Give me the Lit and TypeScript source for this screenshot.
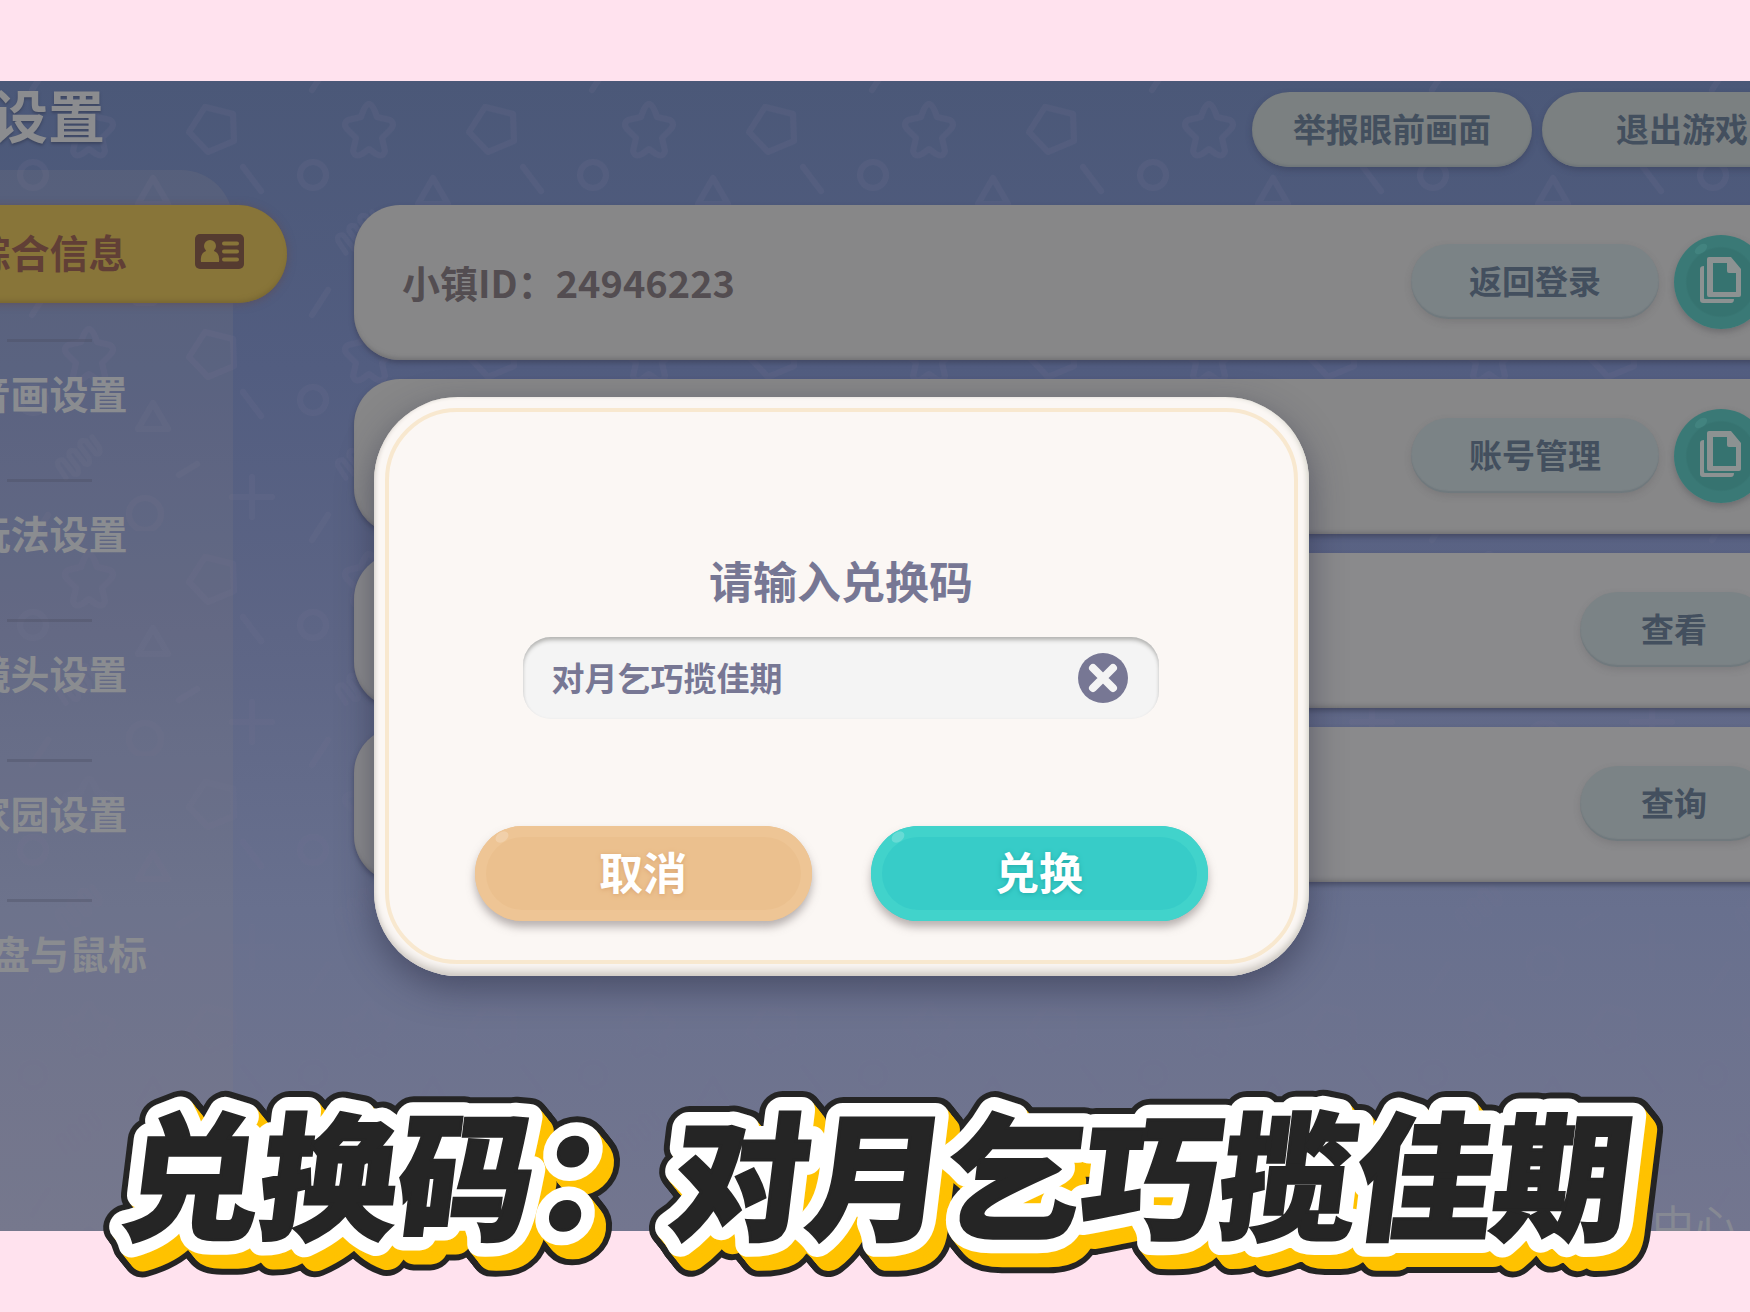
import { LitElement, html, svg, css, nothing } from "lit";
import { customElement, state } from "lit/decorators.js";

const NAV = ["综合信息", "音画设置", "玩法设置", "镜头设置", "家园设置", "键盘与鼠标"];

interface Card {
  label: string;
  action: string;
  copy: boolean;
}

const CARDS: Card[] = [
  { label: "小镇ID：24946223", action: "返回登录", copy: true },
  { label: "", action: "账号管理", copy: true },
  { label: "", action: "查看", copy: false },
  { label: "", action: "查询", copy: false },
];

const CAPTION = "兑换码：对月乞巧揽佳期";
const DEPTH = [14, 12, 10, 8, 6, 4, 2];

@customElement("app-root")
export class AppRoot extends LitElement {
  @state() private code = "对月乞巧揽佳期";

  static styles = css`
    :host {
      display: block;
      font-family: "Noto Sans CJK SC", sans-serif;
      font-weight: 700;
    }
    * {
      box-sizing: border-box;
    }
    button,
    input {
      font: inherit;
      border: 0;
      padding: 0;
      margin: 0;
    }
    .page {
      position: relative;
      display: flex;
      flex-direction: column;
      min-height: 100vh;
      padding: 81px 0;
      background: #ffe2ee;
      overflow: hidden;
    }
    .scene {
      position: relative;
      flex: 1;
      display: flex;
      overflow: hidden;
      background: linear-gradient(#4b5878, #525d80 25%, #5d6585 48%, #68708e 72%, #73768f);
    }
    .pattern {
      position: absolute;
      inset: 0;
      width: 100%;
      height: 100%;
    }
    .frame {
      position: relative;
      flex: 1;
      display: grid;
      grid-template-columns: 373px 1fr;
      margin: 0 -72px 0 -140px;
    }
    .left {
      display: flex;
      flex-direction: column;
    }
    .title {
      margin: 0;
      height: 89px;
      padding-left: 131px;
      font-size: 57px;
      line-height: 64px;
      color: #8b8c8f;
      text-shadow: 0 2px 3px #3c4560;
    }
    .side {
      flex: 1;
      margin-left: 6px;
      padding-top: 35px;
      border-radius: 0 52px 0 0;
      background: rgba(136, 128, 130, 0.16);
    }
    .nav {
      list-style: none;
      margin: 0;
      padding: 0;
    }
    .item::before {
      content: "";
      display: block;
      width: 85px;
      height: 3px;
      margin: 0 auto;
      background: rgba(74, 78, 98, 0.36);
    }
    .item {
      padding-bottom: 31px;
    }
    .item.on::before {
      display: none;
    }
    .item.on {
      padding-bottom: 36px;
      margin-right: -54px;
    }
    .link {
      display: grid;
      grid-template-columns: minmax(0, 1fr) auto minmax(0, 1fr);
      align-items: center;
      height: 106px;
      padding-bottom: 6px;
      font-size: 39px;
      line-height: 48px;
      color: #8a8c90;
      text-decoration: none;
    }
    .label {
      grid-column: 2;
    }
    .on .link {
      height: 98px;
      padding-right: 54px;
      border-radius: 0 49px 49px 0;
      color: #613f36;
      background: #887539;
      box-shadow: inset 0 -4px 5px -2px #776632, 0 1px 8px rgba(96, 76, 84, 0.7);
    }
    .card-icon {
      width: 49px;
      height: 35px;
      margin-left: 67px;
    }
    .main {
      padding: 11px 0 0 121px;
    }
    .top {
      display: flex;
      justify-content: flex-end;
      gap: 10px;
      margin-bottom: 38px;
    }
    .pill {
      height: 75px;
      width: 248px;
      padding-bottom: 4px;
      border-radius: 38px;
      font-size: 33px;
      line-height: 40px;
      color: #434f5e;
      background: #7b8386;
      box-shadow: inset 0 -2px 1px rgba(80, 90, 98, 0.25), 0 3px 7px rgba(80, 76, 84, 0.22);
    }
    .pill.short {
      width: 188px;
    }
    .pill.head {
      width: 280px;
      background: #7b8081;
      box-shadow: inset 0 -2px 2px #70767a, 0 3px 6px rgba(50, 56, 82, 0.45);
    }
    .cards {
      display: flex;
      flex-direction: column;
      gap: 19px;
      padding-right: 20px;
    }
    .card {
      display: flex;
      align-items: center;
      gap: 15px;
      height: 155px;
      padding: 0 34px 2px 48px;
      border-radius: 46px;
      background: #878788;
      box-shadow: inset 0 -4px 4px -2px #727274, 0 3px 5px rgba(60, 64, 90, 0.7);
    }
    .card:nth-child(n + 3) {
      background: #8a8a8c;
    }
    .text {
      flex: 1;
      font-size: 38px;
      line-height: 48px;
      color: #534d51;
    }
    .copy {
      display: grid;
      place-items: center;
      width: 94px;
      height: 94px;
      border-radius: 50%;
      background: radial-gradient(circle closest-side, #367370 0 72%, #3a7976 76%);
      box-shadow: 0 3px 6px rgba(70, 70, 76, 0.4);
    }
    .copy-icon {
      width: 94px;
      height: 94px;
    }
    .center-link {
      position: absolute;
      right: 86px;
      bottom: -20px;
      font-size: 42px;
      line-height: 56px;
      font-weight: 400;
      color: #868993;
      text-decoration: none;
    }
    .veil {
      position: absolute;
      inset: 0;
      display: flex;
      align-items: center;
      justify-content: center;
      padding-top: 60px;
    }
    .modal {
      position: relative;
      width: 935px;
      padding: 155px 101px 55px;
      border-radius: 84px;
      background: #fbf7f4;
      box-shadow: inset 0 -8px 8px -3px #cfcac4, inset -3px 0 5px -1px #dddcd3,
        inset 3px 0 4px -2px #dcd6d0, 0 12px 34px rgba(40, 42, 66, 0.5);
      display: flex;
      flex-direction: column;
      align-items: center;
    }
    .modal::before {
      content: "";
      position: absolute;
      inset: 11px 11px 12px;
      border: 4px solid #f8e8cf;
      border-radius: 72px;
      pointer-events: none;
    }
    .ask {
      font-size: 44px;
      line-height: 56px;
      color: #777794;
    }
    .field {
      display: flex;
      align-items: center;
      align-self: stretch;
      height: 82px;
      margin: 29px 49px 107px 48px;
      padding: 0 31px 0 29px;
      border-radius: 28px;
      background: #f4f4f4;
      box-shadow: inset 0 4px 4px -1px #b4b4b2, inset 0 1px 3px #dcdcdc;
    }
    .input {
      flex: 1;
      min-width: 0;
      height: 60px;
      padding-bottom: 2px;
      background: none;
      outline: none;
      font-size: 33px;
      color: #777794;
    }
    .clear {
      width: 50px;
      height: 50px;
      border-radius: 50%;
      background: none;
    }
    .clear-icon {
      display: block;
      width: 50px;
      height: 50px;
    }
    .actions {
      display: flex;
      gap: 59px;
      align-self: stretch;
    }
    .big {
      position: relative;
      flex: 1;
      height: 95px;
      padding-bottom: 4px;
      border-radius: 48px;
      font-size: 44px;
      line-height: 56px;
      color: #fff;
    }
    .big::before {
      content: "";
      position: absolute;
      left: 20px;
      top: 6px;
      width: 14px;
      height: 10px;
      border-radius: 50%;
      rotate: -35deg;
      background: rgba(255, 255, 255, 0.2);
    }
    .cancel {
      background: #ebc08e;
      text-shadow: 0 1px 5px #d9a470;
      box-shadow: inset 0 0 0 11px #eec595, 0 6px 8px rgba(120, 110, 110, 0.5);
    }
    .ok {
      background: #37ccc8;
      text-shadow: 0 1px 5px #23aba8;
      box-shadow: inset 0 0 0 11px #41d3cb, 0 6px 8px rgba(120, 110, 110, 0.5);
    }
    .caption {
      position: absolute;
      left: 16px;
      bottom: 0;
      width: 100%;
      height: 240px;
      overflow: visible;
      pointer-events: none;
    }
    .cap-text {
      font-size: 137px;
      font-weight: 900;
      text-anchor: middle;
    }
    .outline {
      fill: #252525;
      stroke: #252525;
      stroke-width: 42px;
      stroke-linejoin: round;
    }
    .depth {
      fill: #ffc200;
      stroke: #ffc200;
      stroke-width: 30px;
      stroke-linejoin: round;
    }
    .rim {
      fill: #fff;
      stroke: #fff;
      stroke-width: 30px;
      stroke-linejoin: round;
    }
    .face {
      fill: #252525;
      stroke: #252525;
      stroke-width: 3px;
    }
  `;

  private pattern() {
    return html`<svg class="pattern" aria-hidden="true">
      <defs>
        <pattern id="shapes" width="280" height="225" patternUnits="userSpaceOnUse">
          <g fill="none" stroke="#70708c" stroke-opacity=".19" stroke-width="6" stroke-linecap="round" stroke-linejoin="round">
            <path d="M89 23q4 0 8 13l13 3q6 4 0 10l-8 8 3 13q-2 7-9 3l-7-5-7 5q-7 4-9-3l3-13-8-8q-6-6 0-10l13-3q4-13 8-13z" />
            <path d="M189 51l16-25 28 7 1 27-26 11z" />
            <circle cx="33" cy="94" r="13" />
            <path d="M153 97l15 26h-30zM243 86l18 24M48 209l-16 25M48-16l-16 25" />
            <path d="M179 169l18-11M252 171v40M232 191h40" />
            <circle cx="145" cy="208" r="16" />
            <path stroke-width="5" d="M66 172L58 160Q56 153 63 154L74 168M74 168Q80 170 78 162L69 150Q68 143 75 145L85 158Q91 160 89 152L80 140Q79 133 86 135L96 148Q102 149 99 141L92 131" />
          </g>
        </pattern>
      </defs>
      <rect width="100%" height="100%" fill="url(#shapes)" />
    </svg>`;
  }

  private copyIcon() {
    return html`<svg class="copy-icon" viewBox="0 0 94 94" aria-hidden="true">
      <ellipse cx="27" cy="14" rx="7" ry="4" transform="rotate(-35 27 14)" fill="#42837f" />
      <path fill="#8c9292" fill-rule="evenodd" d="M35 22h22l10 12v26q0 2-2 2H35q-2 0-2-2V24q0-2 2-2zm4 6v29h23V38h-7q-2 0-2-2v-8z" />
      <path fill="#8c9292" d="M30 31v32q0 1 1 1h29q0 4-3 4H29q-3 0-3-3V34q0-3 4-3z" />
    </svg>`;
  }

  private caption() {
    return html`<svg class="caption" role="img" aria-label=${CAPTION}>
      <defs>
        <text id="cap" class="cap-text" x="50%" y="157" transform="skewX(-7)">${CAPTION}</text>
      </defs>
      <use href="#cap" class="outline" />
      ${DEPTH.map((d) => svg`<use href="#cap" class="outline" x=${d * 0.8} y=${d} />`)}
      ${DEPTH.map((d) => svg`<use href="#cap" class="depth" x=${d * 0.8} y=${d} />`)}
      <use href="#cap" class="rim" />
      <use href="#cap" class="face" />
    </svg>`;
  }

  render() {
    return html`<div class="page">
      <div class="scene">
        ${this.pattern()}
        <div class="frame">
          <div class="left">
            <h1 class="title">设置</h1>
            <nav class="side">
              <ul class="nav">
                ${NAV.map(
                  (name, i) => html`<li class=${i === 0 ? "item on" : "item"}>
                    <a class="link" href="#">
                      <span class="label">${name}</span>
                      ${i === 0
                        ? html`<svg class="card-icon" viewBox="0 0 49 35" aria-hidden="true">
                            <rect width="49" height="35" rx="5" fill="#553b30" />
                            <circle cx="15" cy="12" r="6" fill="#887539" />
                            <path d="M12 14h6q0 3 3 4 4 3 3 10H6q-1-7 3-10 3-1 3-4z" fill="#887539" />
                            <path d="M29 9.500h13M29 17.500h13M29 25.500h13" stroke="#887539" stroke-width="4" stroke-linecap="round" />
                          </svg>`
                        : nothing}
                    </a>
                  </li>`,
                )}
              </ul>
            </nav>
          </div>
          <main class="main">
            <div class="top">
              <button class="pill head">举报眼前画面</button>
              <button class="pill head">退出游戏</button>
            </div>
            <div class="cards">
              ${CARDS.map(
                (c) => html`<section class="card">
                  <span class="text">${c.label}</span>
                  <button class=${c.copy ? "pill" : "pill short"}>${c.action}</button>
                  ${c.copy ? html`<button class="copy" aria-label="复制">${this.copyIcon()}</button>` : nothing}
                </section>`,
              )}
            </div>
          </main>
          <a class="center-link" href="#">中心</a>
          <div class="veil">
            <form class="modal" role="dialog" @submit=${(e: Event) => e.preventDefault()}>
              <label class="ask" for="code">请输入兑换码</label>
              <div class="field">
                <input
                  class="input"
                  id="code"
                  type="text"
                  .value=${this.code}
                  @input=${(e: Event) => (this.code = (e.target as HTMLInputElement).value)}
                />
                <button class="clear" type="button" aria-label="清除" @click=${() => (this.code = "")}>
                  <svg class="clear-icon" viewBox="0 0 50 50" aria-hidden="true">
                    <circle cx="25" cy="25" r="25" fill="#777794" />
                    <path d="M15 15l20 20M35 15l-20 20" stroke="#f4f4f4" stroke-width="8" stroke-linecap="round" />
                  </svg>
                </button>
              </div>
              <div class="actions">
                <button class="big cancel" type="button">取消</button>
                <button class="big ok" type="submit">兑换</button>
              </div>
            </form>
          </div>
        </div>
      </div>
      ${this.caption()}
    </div>`;
  }
}
